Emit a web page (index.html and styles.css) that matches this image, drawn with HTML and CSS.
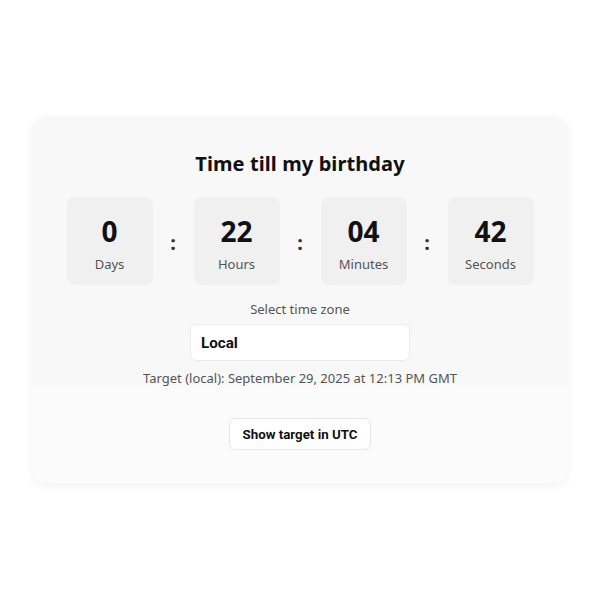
FILE: index.html
```html
<!DOCTYPE html>
<html>
<head>
<meta charset="utf-8">
<link rel="stylesheet" href="styles.css">
</head>
<body>
<div class="card">
  <div class="top">
    <h1 class="title">Time till my birthday</h1>
    <div class="timer">
      <div class="unit"><div class="num">0</div><div class="lbl">Days</div></div>
      <div class="sep">:</div>
      <div class="unit"><div class="num">22</div><div class="lbl">Hours</div></div>
      <div class="sep">:</div>
      <div class="unit"><div class="num">04</div><div class="lbl">Minutes</div></div>
      <div class="sep">:</div>
      <div class="unit"><div class="num">42</div><div class="lbl">Seconds</div></div>
    </div>
    <div class="tzlabel">Select time zone</div>
    <select class="tz"><option>Local</option></select>
    <div class="target">Target (local): September 29, 2025 at 12:13 PM GMT</div>
  </div>
  <div class="bottom">
    <button class="btn">Show target in UTC</button>
  </div>
</div>
</body>
</html>
```
FILE: styles.css
```css
html, body {
  margin: 0;
  padding: 0;
  background: #ffffff;
}
body {
  height: 600px;
  display: flex;
  align-items: center;
  justify-content: center;
  font-family: "Noto Sans", "Open Sans", sans-serif;
}
.card {
  width: 536px;
  border-radius: 14px;
  background: #fbfbfb;
  box-shadow: 0 2px 10px rgba(0,0,0,0.06);
  overflow: hidden;
  display: flex;
  flex-direction: column;
}
.top {
  background: #f8f8f8;
  padding-top: 33px;
  display: flex;
  flex-direction: column;
  align-items: center;
}
.title {
  margin: 0;
  font-size: 20px;
  line-height: 28px;
  font-weight: 700;
  color: #111;
  letter-spacing: 0.1px;
}
.timer {
  margin-top: 19px;
  display: flex;
  align-items: center;
  gap: 13px;
}
.unit {
  width: 86px;
  height: 88px;
  box-sizing: border-box;
  padding-top: 18px;
  background: #f0f0f0;
  border-radius: 8px;
  display: flex;
  flex-direction: column;
  align-items: center;
}
.num {
  font-size: 28px;
  line-height: 32px;
  font-weight: 700;
  color: #111;
}
.lbl {
  font-size: 13px;
  line-height: 18px;
  color: #555;
  margin-top: 8px;
}
.sep {
  width: 15px;
  padding-top: 4px;
  text-align: center;
  font-size: 20px;
  font-weight: 700;
  color: #333;
  line-height: 24px;
}
.tzlabel {
  margin-top: 15px;
  font-size: 13px;
  line-height: 18px;
  color: #555;
}
.tz {
  margin-top: 6px;
  width: 220px;
  height: 37px;
  -webkit-appearance: none;
  appearance: none;
  background: #fff;
  border: 1px solid #ebebeb;
  border-radius: 6px;
  padding: 0 10px;
  font-family: Roboto, sans-serif;
  font-size: 15.2px;
  font-weight: 700;
  color: #111;
}
.target {
  margin-top: 10px;
  font-size: 13px;
  line-height: 14px;
  color: #555;
}
.bottom {
  padding: 33px 0 33px;
  display: flex;
  justify-content: center;
}
.btn {
  width: 142px;
  height: 32px;
  background: #fff;
  border: 1px solid #e6e6e6;
  border-radius: 6px;
  font-family: Roboto, sans-serif;
  font-size: 13.3px;
  font-weight: 700;
  color: #111;
  padding: 0;
}
```
